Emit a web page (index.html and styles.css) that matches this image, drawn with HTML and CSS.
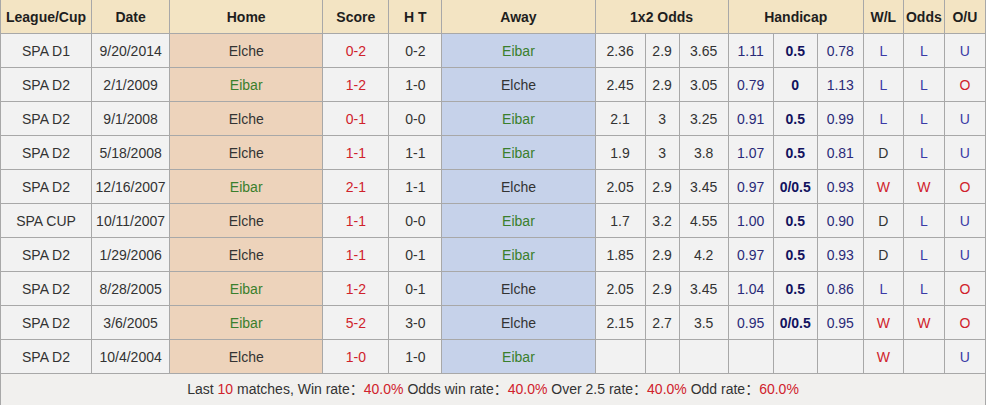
FILE: index.html
```html
<!DOCTYPE html>
<html>
<head>
<meta charset="utf-8">
<link rel="stylesheet" href="styles.css">
</head>
<body>
<table class="stats">
<colgroup>
<col class="w92"><col class="w78"><col class="w153"><col class="w66"><col class="w53"><col class="w153">
<col class="w50"><col class="w34"><col class="w49"><col class="w45"><col class="w44"><col class="w46">
<col class="w40"><col class="w41"><col class="w41">
</colgroup>
<thead>
<tr><th>League/Cup</th><th>Date</th><th>Home</th><th>Score</th><th>H T</th><th>Away</th><th colspan="3">1x2 Odds</th><th colspan="3">Handicap</th><th>W/L</th><th>Odds</th><th>O/U</th></tr>
</thead>
<tbody>
<tr><td>SPA D1</td><td>9/20/2014</td><td class="home">Elche</td><td class="red">0-2</td><td>0-2</td><td class="away green">Eibar</td><td>2.36</td><td>2.9</td><td>3.65</td><td class="hc">1.11</td><td class="hcb">0.5</td><td class="hc">0.78</td><td class="blue">L</td><td class="blue">L</td><td class="blue">U</td></tr>
<tr><td>SPA D2</td><td>2/1/2009</td><td class="home green">Eibar</td><td class="red">1-2</td><td>1-0</td><td class="away">Elche</td><td>2.45</td><td>2.9</td><td>3.05</td><td class="hc">0.79</td><td class="hcb">0</td><td class="hc">1.13</td><td class="blue">L</td><td class="blue">L</td><td class="red">O</td></tr>
<tr><td>SPA D2</td><td>9/1/2008</td><td class="home">Elche</td><td class="red">0-1</td><td>0-0</td><td class="away green">Eibar</td><td>2.1</td><td>3</td><td>3.25</td><td class="hc">0.91</td><td class="hcb">0.5</td><td class="hc">0.99</td><td class="blue">L</td><td class="blue">L</td><td class="blue">U</td></tr>
<tr><td>SPA D2</td><td>5/18/2008</td><td class="home">Elche</td><td class="red">1-1</td><td>1-1</td><td class="away green">Eibar</td><td>1.9</td><td>3</td><td>3.8</td><td class="hc">1.07</td><td class="hcb">0.5</td><td class="hc">0.81</td><td>D</td><td class="blue">L</td><td class="blue">U</td></tr>
<tr><td>SPA D2</td><td>12/16/2007</td><td class="home green">Eibar</td><td class="red">2-1</td><td>1-1</td><td class="away">Elche</td><td>2.05</td><td>2.9</td><td>3.45</td><td class="hc">0.97</td><td class="hcb">0/0.5</td><td class="hc">0.93</td><td class="red">W</td><td class="red">W</td><td class="red">O</td></tr>
<tr><td>SPA CUP</td><td>10/11/2007</td><td class="home">Elche</td><td class="red">1-1</td><td>0-0</td><td class="away green">Eibar</td><td>1.7</td><td>3.2</td><td>4.55</td><td class="hc">1.00</td><td class="hcb">0.5</td><td class="hc">0.90</td><td>D</td><td class="blue">L</td><td class="blue">U</td></tr>
<tr><td>SPA D2</td><td>1/29/2006</td><td class="home">Elche</td><td class="red">1-1</td><td>0-1</td><td class="away green">Eibar</td><td>1.85</td><td>2.9</td><td>4.2</td><td class="hc">0.97</td><td class="hcb">0.5</td><td class="hc">0.93</td><td>D</td><td class="blue">L</td><td class="blue">U</td></tr>
<tr><td>SPA D2</td><td>8/28/2005</td><td class="home green">Eibar</td><td class="red">1-2</td><td>0-1</td><td class="away">Elche</td><td>2.05</td><td>2.9</td><td>3.45</td><td class="hc">1.04</td><td class="hcb">0.5</td><td class="hc">0.86</td><td class="blue">L</td><td class="blue">L</td><td class="red">O</td></tr>
<tr><td>SPA D2</td><td>3/6/2005</td><td class="home green">Eibar</td><td class="red">5-2</td><td>3-0</td><td class="away">Elche</td><td>2.15</td><td>2.7</td><td>3.5</td><td class="hc">0.95</td><td class="hcb">0/0.5</td><td class="hc">0.95</td><td class="red">W</td><td class="red">W</td><td class="red">O</td></tr>
<tr><td>SPA D2</td><td>10/4/2004</td><td class="home">Elche</td><td class="red">1-0</td><td>1-0</td><td class="away green">Eibar</td><td></td><td></td><td></td><td></td><td></td><td></td><td class="red">W</td><td></td><td class="blue">U</td></tr>
<tr class="foot"><td colspan="15">Last <span class="red">10</span> matches, Win rate：<span class="red">40.0%</span> Odds win rate：<span class="red">40.0%</span> Over 2.5 rate：<span class="red">40.0%</span> Odd rate：<span class="red">60.0%</span></td></tr>
</tbody>
</table>
</body>
</html>
```

FILE: styles.css
```css
html, body {
  margin: 0;
  padding: 0;
  background: #ffffff;
}
.stats {
  border-collapse: separate;
  border-spacing: 0;
  table-layout: fixed;
  width: 986px;
  font-family: "Liberation Sans", Arial, "Noto Sans CJK SC", sans-serif;
  font-size: 14px;
  color: #333333;
}
.w92 { width: 92px; }
.w78 { width: 78px; }
.w153 { width: 153px; }
.w66 { width: 66px; }
.w53 { width: 53px; }
.w50 { width: 50px; }
.w34 { width: 34px; }
.w49 { width: 49px; }
.w45 { width: 45px; }
.w44 { width: 44px; }
.w46 { width: 46px; }
.w40 { width: 40px; }
.w41 { width: 41px; }
.stats th, .stats td {
  box-sizing: border-box;
  padding: 0;
  text-align: center;
  vertical-align: middle;
  border-right: 1px solid #a8a8a8;
  border-bottom: 1px solid #a8a8a8;
  white-space: nowrap;
  overflow: hidden;
}
.stats th:first-child, .stats td:first-child {
  border-left: 1px solid #a8a8a8;
}
.stats th {
  height: 34px;
  background: #f3e4c3;
  color: #1e1e1e;
  font-weight: bold;
}
.stats td {
  height: 34px;
  background: #f2f2f2;
}
.stats td.home { background: #edd3bb; }
.stats td.away { background: #c6d2ea; }
.red { color: #d0222c; }
.green { color: #3a7f2c; }
.blue { color: #3a3aa6; }
.hc { color: #2a2a78; }
.hcb { color: #12125e; font-weight: bold; }
.stats tr.foot td {
  height: 34px;
  padding-bottom: 5px;
  background: #f1f0ee;
  color: #333333;
}
```
